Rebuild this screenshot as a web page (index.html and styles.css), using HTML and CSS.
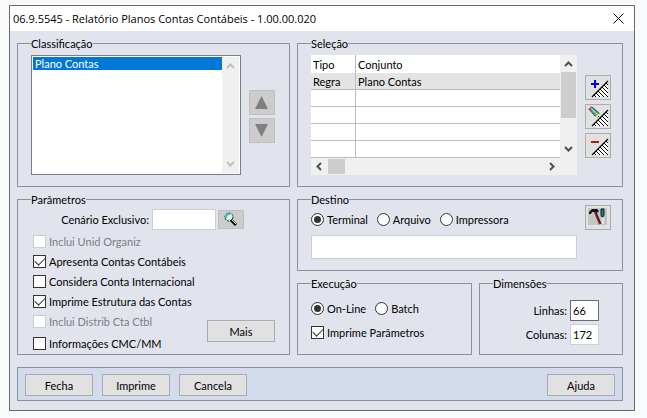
FILE: index.html
```html
<!DOCTYPE html>
<html lang="pt-BR">

<head>
    <meta charset="UTF-8">
    <meta name="viewport" content="width=device-width, initial-scale=1.0">
    <title>Relatório Planos Contas Contábeis</title>
    <link rel="stylesheet" href="styles.css">
</head>

<body>
    <svg class="defs" width="0" height="0">
        <defs>
            <g id="hatch">
                <path d="M7 22 L23 6 V22 Z" fill="#fff" />
                <path d="M7 22 L23 6" stroke="#000" stroke-width="1.2" fill="none" />
                <path d="M9 20 l2 2 M11 18 l4 4 M13 16 l6 6 M15 14 l8 8 M17 12 l6 6 M19 10 l4 4 M21 8 l2 2" stroke="#000" fill="none" />
            </g>
        </defs>
    </svg>

    <div class="window">
        <header class="titlebar">
            <h1>06.9.5545 - Relatório Planos Contas Contábeis - 1.00.00.020</h1>
            <button class="close-btn" type="button" aria-label="Fechar">
                <svg width="11" height="11" viewBox="0 0 11 11"><path d="M.5 .5 L10.5 10.5 M10.5 .5 L.5 10.5" stroke="#111" /></svg>
            </button>
        </header>

        <form class="content">
            <div class="panels">
                <fieldset class="sorting">
                    <legend>Classificação</legend>
                    <div class="listbox">
                        <select size="8" aria-label="Classificação">
                            <option selected>Plano Contas</option>
                        </select>
                        <div class="scroll-v disabled">
                            <svg width="9" height="6" viewBox="0 0 9 6"><path d="M1 5 L4.5 1.5 L8 5" /></svg>
                            <svg width="9" height="6" viewBox="0 0 9 6"><path d="M1 1 L4.5 4.5 L8 1" /></svg>
                        </div>
                    </div>
                    <div class="move-buttons">
                        <button class="icon-btn gray" type="button" aria-label="Subir">
                            <svg width="26" height="25" viewBox="0 0 26 25"><path d="M12.5 6 L19 19 H6 Z" fill="#808080" /></svg>
                        </button>
                        <button class="icon-btn gray" type="button" aria-label="Descer">
                            <svg width="26" height="25" viewBox="0 0 26 25"><path d="M12.5 19 L19 6 H6 Z" fill="#808080" /></svg>
                        </button>
                    </div>
                </fieldset>

                <fieldset class="selection">
                    <legend>Seleção</legend>
                    <div class="grid-box">
                        <table>
                            <thead>
                                <tr><th>Tipo</th><th>Conjunto</th></tr>
                            </thead>
                            <tbody>
                                <tr class="selected"><td>Regra</td><td>Plano Contas</td></tr>
                                <tr><td></td><td></td></tr>
                                <tr><td></td><td></td></tr>
                                <tr><td></td><td></td></tr>
                                <tr><td></td><td></td></tr>
                            </tbody>
                        </table>
                        <div class="scroll-v">
                            <svg width="9" height="6" viewBox="0 0 9 6"><path d="M1 5 L4.5 1.5 L8 5" /></svg>
                            <div class="thumb"></div>
                            <svg width="9" height="6" viewBox="0 0 9 6"><path d="M1 1 L4.5 4.5 L8 1" /></svg>
                        </div>
                        <div class="scroll-h">
                            <svg width="6" height="9" viewBox="0 0 6 9"><path d="M5 1 L1.5 4.5 L5 8" /></svg>
                            <div class="thumb"></div>
                            <svg width="6" height="9" viewBox="0 0 6 9"><path d="M1 1 L4.5 4.5 L1 8" /></svg>
                        </div>
                    </div>
                    <div class="edit-buttons">
                        <button class="icon-btn" type="button" aria-label="Adicionar">
                            <svg width="26" height="25" viewBox="0 0 26 25">
                                <use href="#hatch" />
                                <path d="M6 9 H14 M10 5 V13" stroke="#0000e0" stroke-width="2" />
                            </svg>
                        </button>
                        <button class="icon-btn" type="button" aria-label="Editar">
                            <svg width="26" height="25" viewBox="0 0 26 25">
                                <use href="#hatch" />
                                <path d="M4 5 L7 3 L14 9 L13 13 L10 12 Z" fill="#4fb5a0" stroke="#333" />
                                <path d="M4 6 L7 3" stroke="#d04060" stroke-width="2" />
                                <path d="M6 4 L12 10" stroke="#8fe0d0" />
                                <path d="M10 13 L14 9 V13 Z" fill="#ffee20" />
                                <path d="M13 12 h1 v1 h-1 Z" fill="#000" />
                            </svg>
                        </button>
                        <button class="icon-btn" type="button" aria-label="Remover">
                            <svg width="26" height="25" viewBox="0 0 26 25">
                                <use href="#hatch" />
                                <path d="M6 9 H14" stroke="#b81818" stroke-width="2" />
                            </svg>
                        </button>
                    </div>
                </fieldset>

                <fieldset class="params">
                    <legend>Parâmetros</legend>
                    <div class="scenario">
                        <label for="cenario">Cenário Exclusivo:</label>
                        <input type="text" id="cenario">
                        <button class="icon-btn gray small" type="button" aria-label="Pesquisar">
                            <svg width="26" height="19" viewBox="0 0 26 19">
                                <circle cx="11" cy="7" r="4" fill="#d8f5f0" stroke="#111" stroke-dasharray="2 1" />
                                <path d="M8 8 V6 L10 4 H12" stroke="#30c8b0" stroke-width="2" fill="none" />
                                <path d="M13 10 L18 15" stroke="#111" stroke-width="3" />
                                <path d="M14 10 L18 14" stroke="#ddd" />
                            </svg>
                        </button>
                    </div>
                    <div class="options">
                        <div class="checklist">
                            <label class="disabled"><input type="checkbox" disabled>Inclui Unid Organiz</label>
                            <label><input type="checkbox" checked>Apresenta Contas Contábeis</label>
                            <label><input type="checkbox">Considera Conta Internacional</label>
                            <label><input type="checkbox" checked>Imprime Estrutura das Contas</label>
                            <label class="disabled"><input type="checkbox" disabled>Inclui Distrib Cta Ctbl</label>
                            <label><input type="checkbox">Informações CMC/MM</label>
                        </div>
                        <button class="btn" type="button">Mais</button>
                    </div>
                </fieldset>

                <div class="right-bottom">
                    <fieldset class="target">
                        <legend>Destino</legend>
                        <div class="target-fields">
                            <div class="radios">
                                <label><input type="radio" name="destino" checked>Terminal</label>
                                <label><input type="radio" name="destino">Arquivo</label>
                                <label><input type="radio" name="destino">Impressora</label>
                            </div>
                            <input type="text" aria-label="Caminho do destino">
                        </div>
                        <button class="icon-btn" type="button" aria-label="Configurar">
                            <svg width="26" height="25" viewBox="0 0 26 25">
                                <path d="M3 3 H22 V20 H3 Z" fill="#c4c4c4" />
                                <path d="M4 9 V7 L7 4 H12 L14 6 L12 8 L10 7 L7 7 L6 9 Z" fill="#111" />
                                <path d="M10 7 L15 19" stroke="#8c1515" stroke-width="2" />
                                <path d="M11 7 L16 19" stroke="#222" />
                                <path d="M16 4 H19 V10 L18 12 H17 L16 10 Z" fill="#109030" stroke="#101060" />
                                <path d="M18 12 V19" stroke="#fff" stroke-width="1" />
                            </svg>
                        </button>
                    </fieldset>

                    <fieldset class="execution">
                        <legend>Execução</legend>
                        <div class="radios">
                            <label><input type="radio" name="execucao" checked>On-Line</label>
                            <label><input type="radio" name="execucao">Batch</label>
                        </div>
                        <label><input type="checkbox" checked>Imprime Parâmetros</label>
                    </fieldset>

                    <fieldset class="dimensions">
                        <legend>Dimensões</legend>
                        <label for="linhas">Linhas:</label>
                        <input type="text" id="linhas" class="active" value="66">
                        <label for="colunas">Colunas:</label>
                        <input type="text" id="colunas" value="172">
                    </fieldset>
                </div>
            </div>

            <footer class="actions">
                <button class="btn" type="button">Fecha</button>
                <button class="btn" type="button">Imprime</button>
                <button class="btn" type="button">Cancela</button>
                <button class="btn help" type="button">Ajuda</button>
            </footer>
        </form>
    </div>
</body>

</html>
```
FILE: styles.css
```css
* {
    box-sizing: border-box;
}

body {
    margin: 0;
    padding: 5px 12px 7px 9px;
    background-color: #f9fafc;
    color: #000;
    font-family: Lato, "Liberation Sans", sans-serif;
    font-size: 11px;
    line-height: 13px;
}

button,
input,
select {
    font: inherit;
    color: inherit;
    margin: 0;
}

svg {
    display: block;
    fill: none;
}

.defs {
    position: absolute;
}

.window {
    border: 1px solid #6a6b6e;
    background-color: #e1e4ed;
}

/* title bar */
.titlebar {
    display: flex;
    align-items: center;
    justify-content: space-between;
    height: 25px;
    padding: 0 10px 0 3px;
    background-color: #fff;
}

.titlebar h1 {
    margin: 0;
    font-family: "Open Sans", "Noto Sans", sans-serif;
    font-size: 11px;
    font-weight: normal;
    white-space: nowrap;
}

.close-btn {
    padding: 0;
    border: none;
    background: none;
}

.content {
    padding: 7px 11px 9px 7px;
}

.panels {
    display: grid;
    grid-template-columns: 273fr 326fr;
    gap: 7px;
}

fieldset {
    min-width: 0;
    margin: 0;
    padding: 0 11px 0 13px;
    border: 1px solid #8b91a0;
}

legend {
    padding: 0;
    line-height: 11px;
}

label {
    white-space: nowrap;
}

/* buttons */
.btn {
    width: 68px;
    height: 22px;
    padding: 0;
    border: 1px solid #a9abb0;
    background-color: #e1e1e1;
}

.icon-btn {
    flex: none;
    width: 26px;
    height: 25px;
    padding: 0;
    border: 1px solid #adadad;
    background-color: #e1e1e1;
}

.icon-btn svg {
    margin: -1px;
}

.icon-btn.gray {
    border-color: #bfbfbf;
    background-color: #cccccc;
}

.icon-btn.small {
    height: 19px;
}

/* inputs */
input[type="text"] {
    min-width: 0;
    height: 21px;
    padding: 0 2px;
    border: 1px solid #ccced4;
    border-radius: 0;
    background-color: #fff;
}

input[type="text"].active {
    border-color: #6b6d73;
}

input[type="checkbox"],
input[type="radio"] {
    appearance: none;
    flex: none;
    display: grid;
    place-items: center;
    width: 13px;
    height: 13px;
    margin-right: 3px;
    border: 1px solid #333;
    background-color: #fff;
}

input[type="radio"] {
    border-radius: 50%;
}

input[type="checkbox"]:disabled {
    border-color: #ccc;
}

input[type="radio"]:checked::before {
    content: "";
    width: 7px;
    height: 7px;
    border-radius: 50%;
    background-color: #333;
}

input[type="checkbox"]:checked::before {
    content: "";
    width: 9px;
    height: 5px;
    margin-bottom: 3px;
    border: solid #333;
    border-width: 0 0 1px 1px;
    transform: rotate(-45deg);
}

.checklist label,
.radios label,
.execution label {
    display: flex;
    align-items: center;
}

label.disabled {
    color: #7c7e84;
}

/* scroll bars */
.scroll-v,
.scroll-h {
    display: flex;
    align-items: center;
    background-color: #f0f0f0;
    stroke: #505050;
    stroke-width: 2;
}

.scroll-v {
    flex-direction: column;
    width: 17px;
    padding: 6px 0;
}

.scroll-v svg:last-child {
    margin-top: auto;
}

.scroll-v.disabled {
    justify-content: space-between;
    stroke: #bfbfbf;
}

.scroll-h {
    height: 17px;
    padding: 0 22px 0 5px;
}

.scroll-h svg:last-child {
    margin-left: auto;
}

.thumb {
    background-color: #cdcdcd;
}

.scroll-v .thumb {
    width: 15px;
    height: 46px;
    margin-top: 5px;
}

.scroll-h .thumb {
    width: 17px;
    height: 15px;
    margin-left: 6px;
}

/* Classificação */
.sorting,
.selection {
    display: flex;
    gap: 8px;
    padding-top: 6px;
    padding-bottom: 11px;
}

.sorting {
    padding-right: 14px;
}

.listbox {
    display: flex;
    flex: 1;
    height: 120px;
    padding: 1px;
    border: 1px solid #7a7f8a;
    background-color: #fff;
}

.listbox select {
    flex: 1;
    min-width: 0;
    padding: 0;
    border: none;
    border-radius: 0;
    outline: none;
    background-color: #fff;
    overflow: hidden;
}

.listbox option {
    min-height: 13px;
    padding: 0 2px;
}

.listbox option:checked {
    color: #fff !important;
    background: #0078d7 linear-gradient(#0078d7, #0078d7);
}

.move-buttons,
.edit-buttons {
    display: flex;
    flex-direction: column;
    gap: 3px;
    padding-top: 35px;
}

.edit-buttons {
    gap: 4px;
    padding-top: 20px;
}

/* Seleção */
.grid-box {
    display: grid;
    flex: 1;
    grid-template-columns: 1fr 17px;
    grid-template-rows: 103px 17px;
    background-color: #f0f0f0;
}

.grid-box .scroll-h {
    grid-column: 1 / 3;
}

table {
    width: 100%;
    border-collapse: separate;
    border-spacing: 0;
    background-color: #fff;
}

th,
td {
    height: 17px;
    padding: 0 2px;
    border-bottom: 1px solid #bdbdbd;
    font-weight: normal;
    text-align: left;
}

th {
    height: 18px;
    border-bottom: none;
}

th:first-child,
td:first-child {
    width: 45px;
    border-right: 1px solid #bdbdbd;
}

.selected td {
    background-color: #e4e4e4;
}

/* Parâmetros */
.params {
    padding-top: 4px;
    padding-right: 14px;
}

.scenario {
    display: flex;
    align-items: center;
}

.scenario label {
    width: 118px;
    margin-right: 3px;
    text-align: right;
}

.scenario input {
    width: 64px;
    margin-right: 2px;
}

.options {
    display: flex;
    align-items: flex-end;
    justify-content: space-between;
    padding: 1px 0 0 2px;
}

.checklist label {
    height: 20px;
}

.checklist label:last-child {
    margin-top: 2px;
}

.options .btn {
    margin-bottom: 11px;
}

/* Destino, Execução, Dimensões */
.right-bottom {
    display: grid;
    grid-template-columns: 175fr 144fr;
    gap: 7px;
}

.radios {
    display: flex;
    gap: 9px;
}

.target {
    display: flex;
    grid-column: 1 / 3;
    gap: 8px;
    padding-bottom: 11px;
}

.target-fields {
    flex: 1;
    padding-top: 8px;
}

.target-fields input[type="text"] {
    display: block;
    width: 100%;
    height: 24px;
    margin-top: 9px;
}

.execution {
    padding-top: 13px;
}

.execution .radios {
    margin-bottom: 11px;
}

.dimensions {
    display: grid;
    grid-template-columns: 1fr 29px;
    align-content: start;
    align-items: center;
    gap: 3px;
    padding: 11px 23px 9px 13px;
}

.dimensions label {
    text-align: right;
}

/* bottom bar */
.actions {
    display: flex;
    gap: 9px;
    margin-top: 12px;
    padding: 6px 7px 4px;
    border: 1px solid #8b91a0;
    background-color: #d2daec;
}

.actions .help {
    margin-left: auto;
}
```
